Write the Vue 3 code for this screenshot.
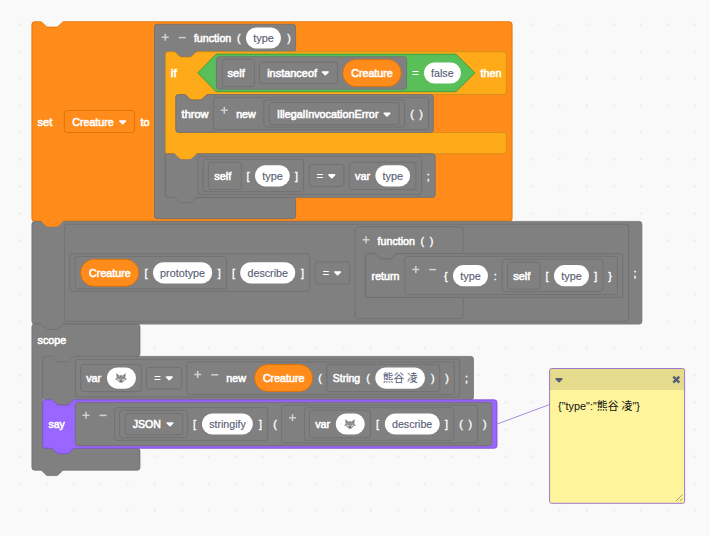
<script setup>
// Scratch-style block geometry, in workspace units
const R = 2.7
const NOTCH = 'c1.35 0 2.03 .68 2.7 1.35l2.7 2.7c.68 .68 1.35 1.35 2.7 1.35h8.1c1.35 0 2.03 -.68 2.7 -1.35l2.7 -2.7c.68 -.68 1.35 -1.35 2.7 -1.35'
const NOTCH_BACK = 'c-1.35 0 -2.03 .68 -2.7 1.35l-2.7 2.7c-.68 .68 -1.35 1.35 -2.7 1.35h-8.1c-1.35 0 -2.03 -.68 -2.7 -1.35l-2.7 -2.7c-.68 -.68 -1.35 -1.35 -2.7 -1.35'

// x, y: left top; r, b: right bottom; mouth: [x, top, bottom] of a C-shaped block
function blockPath({ x, y, r, b, top = true, bottom = true, mouth }) {
  let d = `M${x} ${y + R}a${R} ${R} 0 0 1 ${R} ${-R}`
  if (top) d += `H${x + 8.1}${NOTCH}`
  d += `H${r - R}a${R} ${R} 0 0 1 ${R} ${R}`
  if (mouth) {
    const [mx, mt, mb] = mouth
    d += `V${mt - R}a${R} ${R} 0 0 1 ${-R} ${R}H${mx + 32.4}${NOTCH_BACK}H${mx + R}a${R} ${R} 0 0 0 ${-R} ${R}`
    d += `V${mb - R}a${R} ${R} 0 0 0 ${R} ${R}H${r - R}a${R} ${R} 0 0 1 ${R} ${R}`
  }
  d += `V${b - R}a${R} ${R} 0 0 1 ${-R} ${R}`
  if (bottom) d += `H${x + 32.4}${NOTCH_BACK}`
  return d + `H${x + R}a${R} ${R} 0 0 1 ${-R} ${-R}Z`
}

const blocks = [
  { c: 'orange', x: 31.9, y: 21.7, r: 512.1, b: 221.4 },
  { c: 'gray', x: 154.4, y: 24.3, r: 295.6, b: 218.7, top: false, bottom: false, mouth: [165.4, 51.5, 197.5] },
  { c: 'yellow', x: 165.4, y: 51.7, r: 506.4, b: 153.8, mouth: [175.8, 94.5, 132.5] },
  { c: 'gray', x: 175.8, y: 94.5, r: 433.4, b: 132.4, bottom: false },
  { c: 'gray', x: 165.4, y: 153.8, r: 435.2, b: 197.4 },
  { c: 'gray', x: 31.9, y: 221.4, r: 641.9, b: 324.1 },
  { c: 'gray', x: 355.2, y: 226.7, r: 463.3, b: 318.6, top: false, bottom: false, mouth: [365.4, 253.6, 297.4] },
  { c: 'gray', x: 365.4, y: 253.6, r: 622.8, b: 297.4, bottom: false },
  { c: 'gray', x: 31.9, y: 324.1, r: 140, b: 470.2, mouth: [42.7, 356.4, 448.3] },
  { c: 'gray', x: 42.7, y: 356.4, r: 473.5, b: 399.8 },
  { c: 'purple', x: 42.7, y: 399.8, r: 497, b: 448.3 },
]
// Bottom tabs of coloured blocks, laid over the notch of the next block
const tabs = [
  { c: 'orange', x: 31.9, y: 221.4 },
  { c: 'yellow', x: 165.4, y: 153.8 },
]

// Expressions lying on a differently coloured block: left, top, right, bottom
const plates = [
  [216.4, 56.7, 406.6, 89.3], [75.4, 402.4, 491.7, 445.7],
]
// Expression slots and dropdown outlines
const frames = [
  [222.3, 59.4, 254.6, 86.6], [259.4, 62.1, 337.6, 83.7],
  [213.4, 97.4, 428.6, 129.6], [263.8, 99.8, 404.6, 127], [269.2, 102.5, 399.2, 124.7],
  [197.8, 156.5, 421.6, 194.4], [203.2, 159.3, 303.6, 191.7], [208.4, 162.2, 241.3, 189.5],
  [309.3, 164.4, 343.9, 186.6], [349.3, 162.2, 415.9, 189.5],
  [64.4, 224.2, 628.6, 321.4], [69.8, 253.8, 309.7, 291.4], [75.3, 256.5, 226.6, 288.8],
  [315.1, 261.9, 349.7, 283.9],
  [404.8, 256.4, 617.4, 294.6], [502.2, 259.1, 602.9, 291.6], [507.5, 261.9, 540.1, 289.1],
  [75.4, 359.3, 459.6, 397], [80.6, 364.5, 141.4, 391.6], [146.4, 367.4, 181.7, 388.9],
  [186.8, 362, 454.3, 394.4], [326.8, 364.5, 439.8, 391.6],
  [114.4, 407.6, 267.7, 440.4], [119.7, 410.3, 187.6, 437.7],
  [125.3, 413.3, 182.7, 434.8], [281.4, 405.1, 477.6, 443], [304.4, 407.7, 453.8, 440.3],
  [309.5, 410.2, 370.4, 437.8],
]
const setFrame = [64.3, 110.5, 134.5, 132.5]

// Rounded variable reporters: left, top, right, bottom
const reporters = [
  [342.8, 59.6, 401.2, 86.6], [80.6, 259.3, 138.8, 286.3], [254.5, 364.5, 312.7, 391.5],
]
const inputs = [
  [246, 27.4, 281, 48.6], [424, 62.4, 461, 83.6], [255, 165.2, 289.8, 186.4], [375.4, 165.2, 410.1, 186.4],
  [153, 262.2, 212.2, 283.4], [240.2, 262.2, 295.3, 283.4], [453, 265.1, 488, 286.3], [554, 265.1, 589, 286.3],
  [107, 367.5, 136, 388.7], [375.3, 367.5, 425, 388.7], [202, 413.4, 252.9, 434.6],
  [335.8, 413.4, 364.8, 434.6], [384.8, 413.4, 439.8, 434.6],
]

// Left edge, centre line, width, text
const labels = [
  [37.5, 122, 14.8, 'set'], [72.2, 122, 41.6, 'Creature'], [140.5, 122, 9, 'to'],
  [193.9, 38, 37.4, 'function'], [170.8, 73, 6, 'if'], [227.6, 73, 17.2, 'self'],
  [267.2, 73, 49.8, 'instanceof'], [351.2, 73, 41.6, 'Creature'], [480.4, 73, 21, 'then'],
  [181.6, 114.3, 26.8, 'throw'], [236.2, 114.3, 19.5, 'new'], [276.9, 114.3, 101.6, 'IllegalInvocationError'],
  [214.2, 176, 17.2, 'self'], [355.1, 176, 15, 'var'],
  [89.1, 273, 41.6, 'Creature'], [377.6, 241.2, 37.4, 'function'], [371.6, 276, 27.8, 'return'],
  [513.2, 276, 17.2, 'self'],
  [37.5, 340.2, 28.8, 'scope'], [86.2, 378, 15, 'var'], [226.2, 378, 19.8, 'new'],
  [262.9, 378, 41.6, 'Creature'], [332.8, 378, 27.4, 'String'],
  [48.6, 424, 16.2, 'say'], [132.7, 424, 28.2, 'JSON'], [315.2, 424, 15, 'var'],
]
const values = [
  [253.2, 38, 20.6, 'type'], [431, 73, 22.6, 'false'], [262.2, 176, 20.6, 'type'], [382.5, 176, 20.6, 'type'],
  [160.1, 273, 45, 'prototype'], [247.6, 273, 40.3, 'describe'], [460.3, 276, 20.6, 'type'],
  [561.3, 276, 20.6, 'type'], [382.8, 378, 35, '熊谷 凌'], [209.2, 424, 36.6, 'stringify'], [392, 424, 40.3, 'describe'],
]
// Centre, centre line, mark
const marks = [
  [238.7, 38, '('], [289, 38, ')'], [415.4, 73, '='], [412, 114.3, '('], [421, 114.3, ')'],
  [248, 176, '['], [296.6, 176, ']'], [320, 176, '='], [428.3, 176, ';'],
  [146, 273, '['], [219.2, 273, ']'], [233.5, 273, '['], [302.4, 273, ']'], [326, 273, '='],
  [422.4, 241.2, '('], [431.6, 241.2, ')'], [445.9, 276, '{'], [495.3, 276, ':'],
  [547.1, 276, '['], [595.7, 276, ']'], [610, 276, '}'], [635, 273, ';'],
  [157.4, 378, '='], [320, 378, '('], [368, 378, '('], [432.7, 378, ')'], [447, 378, ')'], [466.4, 378, ';'],
  [194.6, 424, '['], [260.4, 424, ']'], [275, 424, '('], [377.6, 424, '['], [446.6, 424, ']'],
  [461, 424, '('], [470.4, 424, ')'], [484.9, 424, ')'],
]
const carets = [
  [122.7, 122.3], [325.3, 73.3], [387, 114.5], [331.8, 176.2], [337.6, 273.3], [169.3, 378.3], [170, 424.3],
]
const plus = [
  [165.3, 37.2], [224.3, 110.2], [366, 239.7], [415.8, 269.4], [197.7, 374.6], [86, 415.2], [292.5, 417.8],
]
const minus = [[182.3, 37.6], [432.6, 269.6], [214.7, 374.8], [103, 415.4]]
const wolves = [[121, 378], [350, 424]]

const isCjk = (t) => /[\u4e00-\u9fff]/.test(t)
</script>

<template>
  <main class="workspace">
    <svg class="canvas" width="710" height="536" viewBox="0 0 710 536">
      <defs>
        <pattern id="grid" x="18.7" y="23.3" width="27" height="27" patternUnits="userSpaceOnUse">
          <rect x=".4" y=".5" width="1.4" height="1.4" fill="#ddd" />
        </pattern>
        <g id="wolf">
          <path d="M-4.9 -5L-1.8 -2.4Q0 -3 1.8 -2.4L4.9 -5L4.3 -1L5.8 1.8L3.3 2.4L1.3 4.8H-1.3L-3.3 2.4L-5.8 1.8L-4.3 -1Z" fill="#999" />
          <path d="M-4.2 -3.8L-2.5 -2.3L-3.6 -1ZM4.2 -3.8L2.5 -2.3L3.6 -1Z" fill="#666" />
          <path d="M-4.5 1.2L-1.7 .9L-.9 2.8L-2.6 2ZM4.5 1.2L1.7 .9L.9 2.8L2.6 2Z" fill="#ddd" />
          <path d="M-2.5 -.5L-1.1 .3L-2.1 .5ZM2.5 -.5L1.1 .3L2.1 .5ZM-1 2.8H1L0 4.2ZM-.4 -2.4H.4L0 .4Z" fill="#444" />
        </g>
      </defs>
      <rect width="710" height="536" fill="url(#grid)" />

      <path v-for="(b, i) in blocks" :key="'b' + i" :class="['block', b.c]" :d="blockPath(b)" />
      <path
        v-for="(n, i) in tabs" :key="'k' + i" :class="['tab', n.c]"
        :d="`M${n.x + 32.4} ${n.y}${NOTCH_BACK}z`"
      />
      <path class="block green" d="M216.2 54.1H456L474.9 72.9L456 91.7H216.2L197.7 72.9Z" />
      <rect
        class="block orange" :x="setFrame[0]" :y="setFrame[1]"
        :width="setFrame[2] - setFrame[0]" :height="setFrame[3] - setFrame[1]" rx="2.7"
      />
      <rect
        v-for="(f, i) in plates" :key="'p' + i" class="block gray"
        :x="f[0]" :y="f[1]" :width="f[2] - f[0]" :height="f[3] - f[1]" rx="2.7"
      />
      <rect
        v-for="(f, i) in frames" :key="'f' + i" class="block frame"
        :x="f[0]" :y="f[1]" :width="f[2] - f[0]" :height="f[3] - f[1]" rx="2.7"
      />
      <rect
        v-for="(f, i) in reporters" :key="'r' + i" class="block orange"
        :x="f[0]" :y="f[1]" :width="f[2] - f[0]" :height="f[3] - f[1]" rx="13.5"
      />
      <rect
        v-for="(f, i) in inputs" :key="'i' + i" class="input"
        :x="f[0]" :y="f[1]" :width="f[2] - f[0]" :height="f[3] - f[1]" rx="10.6"
      />

      <text
        v-for="(t, i) in labels" :key="'l' + i" class="label" :x="t[0]" :y="t[1] + 4"
        :textLength="t[2]" lengthAdjust="spacingAndGlyphs"
      >{{ t[3] }}</text>
      <text
        v-for="(t, i) in values" :key="'v' + i" :class="['value', { cjk: isCjk(t[3]) }]" :x="t[0]" :y="t[1] + 4"
        :textLength="t[2]" lengthAdjust="spacingAndGlyphs"
      >{{ t[3] }}</text>
      <text v-for="(t, i) in marks" :key="'m' + i" class="label mark" :x="t[0]" :y="t[1] + 3.7">{{ t[2] }}</text>

      <path v-for="(c, i) in carets" :key="'c' + i" class="caret" :d="`M${c[0] - 2.8} ${c[1] - 1.3}h5.6l-2.8 2.7z`" />
      <path v-for="(p, i) in plus" :key="'p' + i" class="tool" :d="`M${p[0] - 3.5} ${p[1]}h7m-3.5 -3.5v7`" />
      <path v-for="(p, i) in minus" :key="'n' + i" class="tool" :d="`M${p[0] - 3.5} ${p[1]}h7`" />
      <use v-for="(w, i) in wolves" :key="'w' + i" href="#wolf" :x="w[0]" :y="w[1]" />

      <path class="leader" d="M497.2 424L549.7 404.5" />
      <g class="note">
        <rect x="549.6" y="368.5" width="135" height="134.8" rx="2" fill="#fef49c" />
        <path d="M549.6 390V370.5a2 2 0 0 1 2 -2h131a2 2 0 0 1 2 2V390z" fill="#e4db8c" />
        <rect class="edge" x="549.6" y="368.5" width="135" height="134.8" rx="2" />
        <path d="M556.2 378.9h5.6l-2.8 2.7z" fill="#575e75" stroke="#575e75" stroke-width="1.6" stroke-linejoin="round" />
        <path d="M673.3 376.7l6 6m0 -6l-6 6" stroke="#575e75" stroke-width="2.4" />
        <path d="M676 501l6.5 -6.5m-2.6 6.5l2.6 -2.6" stroke="#99946a" stroke-width=".9" />
        <text class="comment" x="558" y="410.2" textLength="82" lengthAdjust="spacingAndGlyphs">{"type":"熊谷 凌"}</text>
      </g>
    </svg>
  </main>
</template>

<style>
body {
  background: #f9f9f9;
}
</style>

<style scoped>
.workspace {
  width: 710px;
  height: 536px;
  overflow: hidden;
  background: #f9f9f9;
}
.canvas {
  display: block;
  font-family: "Liberation Sans", "Noto Sans CJK JP", sans-serif;
  font-size: 11.3px;
}
.block {
  stroke-width: 0.8;
}
.gray {
  fill: #808080;
  stroke: #6b6b6b;
}
.frame {
  fill: none;
  stroke: #6b6b6b;
}
.orange {
  fill: #ff8c1a;
  stroke: #db6e00;
}
.yellow {
  fill: #ffab19;
  stroke: #cf8b17;
}
.green {
  fill: #59c059;
  stroke: #389438;
}
.purple {
  fill: #9966ff;
  stroke: #774dcb;
}
.block.gray,
.block.frame {
  stroke-width: 0.7;
}
.tab {
  stroke: none;
}
.tab.orange,
.tab.yellow {
  stroke: none;
}
.input {
  fill: #fff;
}
.label {
  fill: #fff;
  stroke: #fff;
  stroke-width: 0.6;
}
.mark {
  font-size: 10.8px;
  stroke-width: 0.35;
  text-anchor: middle;
}
.value {
  fill: #575e75;
  stroke: #575e75;
  stroke-width: 0.15;
}
.cjk {
  stroke: none;
}
.caret {
  fill: #fff;
  stroke: #fff;
  stroke-width: 1.6;
  stroke-linejoin: round;
}
.tool {
  fill: none;
  stroke: #d0d0d0;
  stroke-width: 1.5;
}
.leader {
  stroke: #a98ae0;
  stroke-width: 1;
}
.edge {
  fill: none;
  stroke: #9c78cc;
  stroke-width: 1;
}
.comment {
  fill: #111;
  font-size: 11.5px;
}
</style>
